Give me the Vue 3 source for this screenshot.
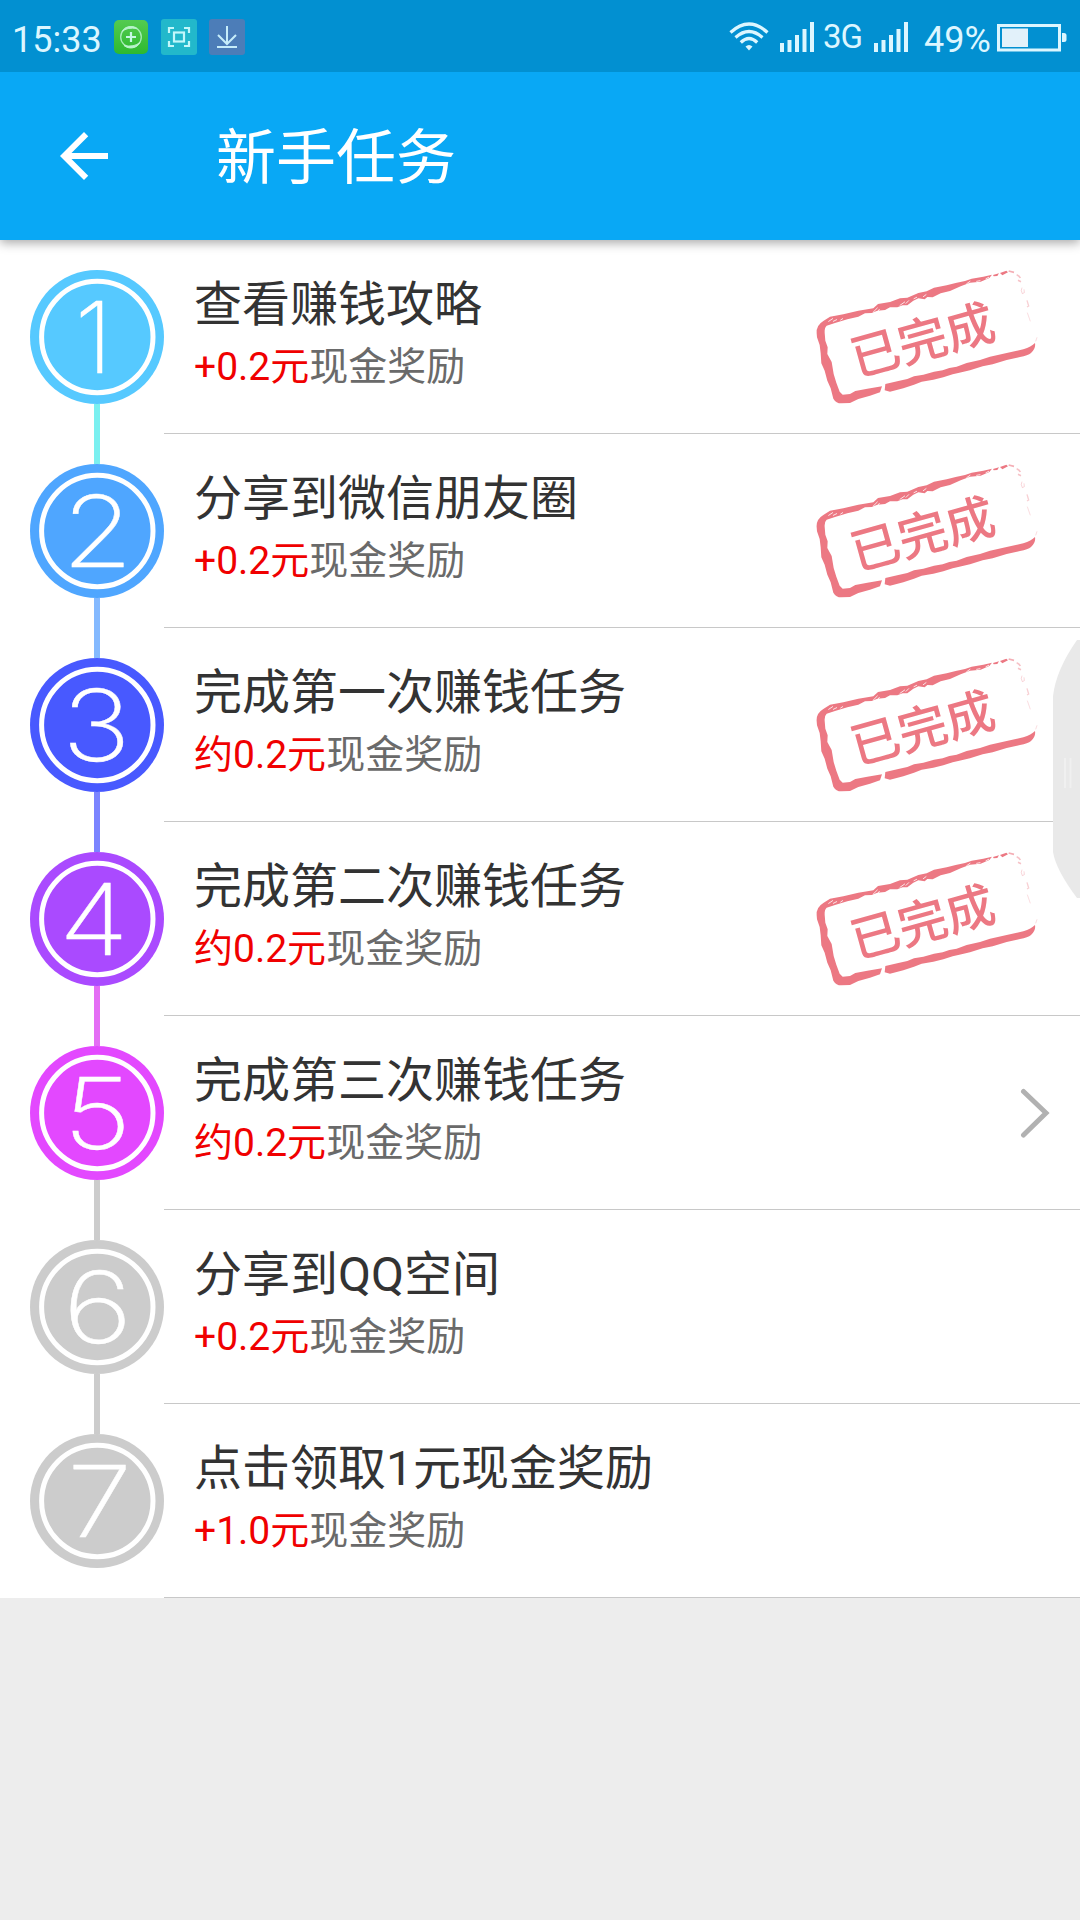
<script setup>
const tasks = [
  { title: '查看赚钱攻略', amount: '+0.2元', color: '#56c9ff', line: '#7af0f0', state: 'done', dx: -3.5, wide: 1 },
  { title: '分享到微信朋友圈', amount: '+0.2元', color: '#4fa6ff', line: '#84b9ff', state: 'done', dx: 0.5, wide: 1.16 },
  { title: '完成第一次赚钱任务', amount: '约0.2元', color: '#4859ff', line: '#7b84ff', state: 'done', dx: -0.7, wide: 1.17 },
  { title: '完成第二次赚钱任务', amount: '约0.2元', color: '#aa4aff', line: '#e46ef5', state: 'done', dx: -3.2, wide: 1.15 },
  { title: '完成第三次赚钱任务', amount: '约0.2元', color: '#e348ff', line: '#cccccc', state: 'open', dx: 0.2, wide: 1.19 },
  { title: '分享到QQ空间', amount: '+0.2元', color: '#cccccc', line: '#cccccc', state: '', dx: 0.6, wide: 1.21 },
  { title: '点击领取1元现金奖励', amount: '+1.0元', color: '#cccccc', line: '', state: '', dx: 2.6, wide: 1.19 },
]
</script>

<template>
  <div class="screen">
    <header class="status">
      <span class="clock">15:33</span>
      <svg class="app-icon green" width="34" height="34" viewBox="0 0 34 34">
        <defs>
          <linearGradient id="g" x1="0" y1="0" x2="0" y2="1">
            <stop offset="0" stop-color="#54cb50" />
            <stop offset="1" stop-color="#2db92f" />
          </linearGradient>
        </defs>
        <rect width="34" height="34" rx="5" fill="url(#g)" />
        <circle cx="17" cy="17" r="10.3" fill="none" stroke="#a5ecb5" stroke-width="1.3" />
        <path d="M8 11.500A10.500 10.500 0 0 1 23 8.500Q13 7 8 11.500ZM26 22.500A10.500 10.500 0 0 1 10 25.500Q20 27.500 26 22.500Z" fill="#b8f3cb" stroke="#b8f3cb" />
        <path d="M17 12v10M12 17h10" stroke="#c5f7e4" stroke-width="2.200" />
      </svg>
      <svg class="app-icon teal" width="36" height="36" viewBox="0 0 36 36">
        <rect width="36" height="36" rx="3" fill="#22b8cb" />
        <g fill="none" stroke="#c2f7fa" stroke-width="2.200">
          <path d="M8 14V9h5M23 9h5v5M28 22v5h-5M13 27H8v-5" />
          <rect x="13" y="13.500" width="10" height="9" />
        </g>
      </svg>
      <svg class="app-icon blue" width="36" height="36" viewBox="0 0 36 36">
        <rect width="36" height="36" rx="3" fill="#4c7db8" />
        <path d="M18 7v18M9 16l9 9 9-9M8 28h20" fill="none" stroke="#c6edfa" stroke-width="2" />
      </svg>
      <span class="grow"></span>
      <svg class="wifi" width="40" height="30" viewBox="0 0 40 30">
        <g fill="none" stroke="#dcf6ff" stroke-width="3.200">
          <path d="M1.500 10.500Q20-6.500 38.500 10.500" />
          <path d="M6.500 15.500Q20 3.500 33.500 15.500" />
          <path d="M11.800 20.500Q20 12.500 28.200 20.500" />
        </g>
        <path d="M16.500 24.500Q20 21.500 23.500 24.500L20 28.500Z" fill="#dcf6ff" />
      </svg>
      <svg class="bars" width="34" height="30" viewBox="0 0 34 30">
        <path d="M0 21h4v9H0zM7.500 18h4v12h-4zM15 13h4v17h-4zM22.500 7h4v23h-4zM30 0h4v30h-4z" fill="#dcf6ff" />
      </svg>
      <span class="net">3G</span>
      <svg class="bars" width="34" height="30" viewBox="0 0 34 30">
        <path d="M0 21h4v9H0zM7.500 18h4v12h-4zM15 13h4v17h-4zM22.500 7h4v23h-4zM30 0h4v30h-4z" fill="#dcf6ff" />
      </svg>
      <span class="percent">49%</span>
      <svg class="battery" width="70" height="28" viewBox="0 0 70 28">
        <rect x="1.500" y="1.500" width="61" height="24.500" fill="none" stroke="#dcf6ff" stroke-width="3" />
        <rect x="5" y="4.500" width="26" height="18.500" fill="#e2f1fa" />
        <path d="M65 9h2q2.500 0 2.500 2.500v4q0 2.500-2.500 2.500h-2z" fill="#dcf6ff" />
      </svg>
    </header>

    <nav class="bar">
      <svg class="back" width="72" height="72" viewBox="0 0 24 24">
        <path d="M20 11H7.830l5.590-5.590L12 4l-8 8 8 8 1.410-1.410L7.830 13H20v-2z" fill="#fff" />
      </svg>
      <h1>新手任务</h1>
    </nav>

    <main class="list">
      <section v-for="(t, i) in tasks" :key="i" class="row">
        <div class="rail">
          <svg class="badge" width="134" height="134" viewBox="0 0 134 134">
            <circle cx="67" cy="67" r="67" :fill="t.color" />
            <circle cx="67.300" cy="67" r="55.700" fill="none" stroke="#fff" stroke-width="5" />
            <text :transform="`translate(${67 + t.dx} 102.5) scale(${t.wide} 1)`" class="num">{{ i + 1 }}</text>
          </svg>
          <i v-if="t.line" class="line" :style="{ background: t.line }"></i>
        </div>
        <div class="body">
          <div class="texts">
            <h2>{{ t.title }}</h2>
            <p><b>{{ t.amount }}</b>现金奖励</p>
          </div>
          <svg v-if="t.state === 'done'" class="stamp" width="225" height="138" viewBox="75 54 675 414">
            <!-- left and top edge of the frame -->
            <path
              d="M80 250Q78 226 100 213L120 200L160 193L205 182L250 175L264 162L300 156L330 145L352 143L385 129L410 124L432 113L470 106L497 99L525 93L545 86L580 80L606 74L598 84L572 95L540 98L512 109L480 123L452 130L428 142L412 141L404 148L385 145L370 152L352 166L338 166L322 172L300 172L285 180L262 182L245 189L225 190L205 200L172 208L135 219L110 227Q103 233 104 248L106 272L113 292L112 312L125 336L131 372L139 398L149 425L158 434L180 432L196 423L232 416L276 409L270 427L240 437L205 447L180 459L154 460Q138 460 130 446L122 415L112 392L104 362L94 340L92 310L89 285L81 262Z"
              fill="#ec7883"
            />
            <!-- bottom edge -->
            <path
              d="M286 402L325 393L352 387L372 379L400 374L432 365L458 361L478 354L500 350L530 339L570 330L600 320L650 309L700 298Q724 290 735 279Q738 295 723 309Q714 317 690 321L650 330L608 343L578 349L540 361L508 368L488 373L460 382L430 389L395 395L372 404L340 415L300 425L284 421Z"
              fill="#ec7883"
            />
            <g fill="#ec7883">
              <path d="M609 75l18-5-5 8-11 1zM630 69l19-7 5 5-17 9z" />
            </g>
            <g fill="none" stroke="#ec7883" stroke-width="5">
              <path d="M656 63l16 4" opacity=".6" />
              <path d="M680 74q8 3 11 10M684 91l9 4" opacity=".45" />
              <path d="M696 113q-5 8 1 18l6-3-1-10" opacity=".3" stroke-width="3" />
              <path d="M711 151l5 17-5 3" opacity=".35" stroke-width="4" />
              <path d="M712 188l9 26M741 262l-4 12" opacity=".25" stroke-width="3" />
            </g>
            <g fill="none" stroke="#fff" stroke-width="3" stroke-linecap="round">
              <path
                d="M116 214l12-8M130 214l10-5M152 210l6-4M250 186l12-12M262 186l6-8M330 166l14-10M348 160l8-8M372 146l8-4M400 140l8-6M530 101l10-7M560 94l10-2M588 86l8-4"
                opacity=".8"
              />
            </g>
            <text transform="translate(398 272) rotate(-15.500)" class="stamp-text" x="0" y="52">已完成</text>
          </svg>
          <svg v-if="t.state === 'open'" class="chevron" width="30" height="50" viewBox="0 0 30 50">
            <path d="M3.500 3.500L26 25L3.500 47" fill="none" stroke="#b1b1b1" stroke-width="5" stroke-linecap="round" />
          </svg>
        </div>
      </section>
    </main>

    <svg class="handle" width="28" height="260" viewBox="0 0 28 260">
      <path d="M28 0H25Q4 30 1 56V212Q4 230 25 258H28Z" fill="#e9e9e9" />
      <path d="M13 118v30M18.500 118v30" stroke="#f0f0f0" stroke-width="2" />
    </svg>
  </div>
</template>

<style>
body {
  background: #ededed;
}
</style>

<style scoped>
.screen {
  position: relative;
  width: 1080px;
  height: 1920px;
  overflow: hidden;
  background: #ededed;
  font-family: Roboto, "Noto Sans CJK SC", sans-serif;
}
.status {
  position: relative;
  z-index: 2;
  display: flex;
  align-items: flex-start;
  height: 72px;
  background: #0290d1;
  color: #dcf6ff;
}
.status svg {
  flex: none;
}
.clock,
.percent {
  font-size: 36px;
  line-height: 42px;
  margin-top: 19px;
  white-space: nowrap;
}
.clock {
  width: 102px;
  padding-left: 12px;
}
.green {
  margin-top: 20px;
}
.teal {
  margin: 19px 0 0 13px;
}
.blue {
  margin: 19px 0 0 12px;
}
.grow {
  flex: 1;
}
.wifi {
  margin: 22px 11px 0 0;
}
.bars {
  margin-top: 22px;
}
.net {
  width: 51px;
  margin-left: 9px;
  margin-top: 18px;
  font-size: 33px;
  line-height: 38px;
  letter-spacing: -1px;
}
.percent {
  width: 73px;
  margin-left: 16px;
}
.battery {
  margin-top: 24px;
  margin-right: 13px;
}
.bar {
  position: relative;
  z-index: 1;
  display: flex;
  align-items: center;
  height: 168px;
  padding-left: 48px;
  box-sizing: border-box;
  background: #09a8f5;
  box-shadow: 0 3px 10px rgba(0, 0, 0, 0.34);
}
h1 {
  margin: 5px 0 0 96px;
  color: #fff;
  font-size: 60px;
  line-height: 80px;
  font-weight: 400;
}
.row {
  display: flex;
  height: 194px;
  background: #fff;
}
.rail {
  display: flex;
  flex: none;
  flex-direction: column;
  align-items: center;
  position: relative;
  width: 164px;
  height: 254px;
  padding: 30px 0 0 30px;
  box-sizing: border-box;
}
.badge {
  flex: none;
}
.line {
  width: 6px;
  height: 60px;
}
.num {
  fill: #fff;
  stroke: #fff;
  stroke-width: 0.4px;
  font-family: Inter, sans-serif;
  font-size: 99px;
  font-weight: 200;
  text-anchor: middle;
}
.body {
  display: flex;
  flex: 1;
  box-sizing: border-box;
  height: 194px;
  border-bottom: 1px solid #c8c8c8;
}
.texts {
  flex: 1;
  padding: 33px 0 0 30px;
}
h2 {
  margin: 0;
  font-size: 48px;
  line-height: 64px;
  font-weight: 400;
  color: #333;
}
p {
  margin: 3px 0 0;
  font-size: 39px;
  line-height: 54px;
  color: #6a6a6a;
}
b {
  font-weight: 400;
  color: #f00000;
}
.stamp {
  margin: 28px 40px 0 0;
}
.stamp-text {
  fill: #ec7883;
  font-family: "Noto Sans CJK SC", sans-serif;
  font-size: 147px;
  font-weight: 500;
  text-anchor: middle;
}
.chevron {
  margin: 72px 30px 0 0;
}
.handle {
  position: absolute;
  right: 0;
  top: 640px;
  z-index: 2;
}
</style>
